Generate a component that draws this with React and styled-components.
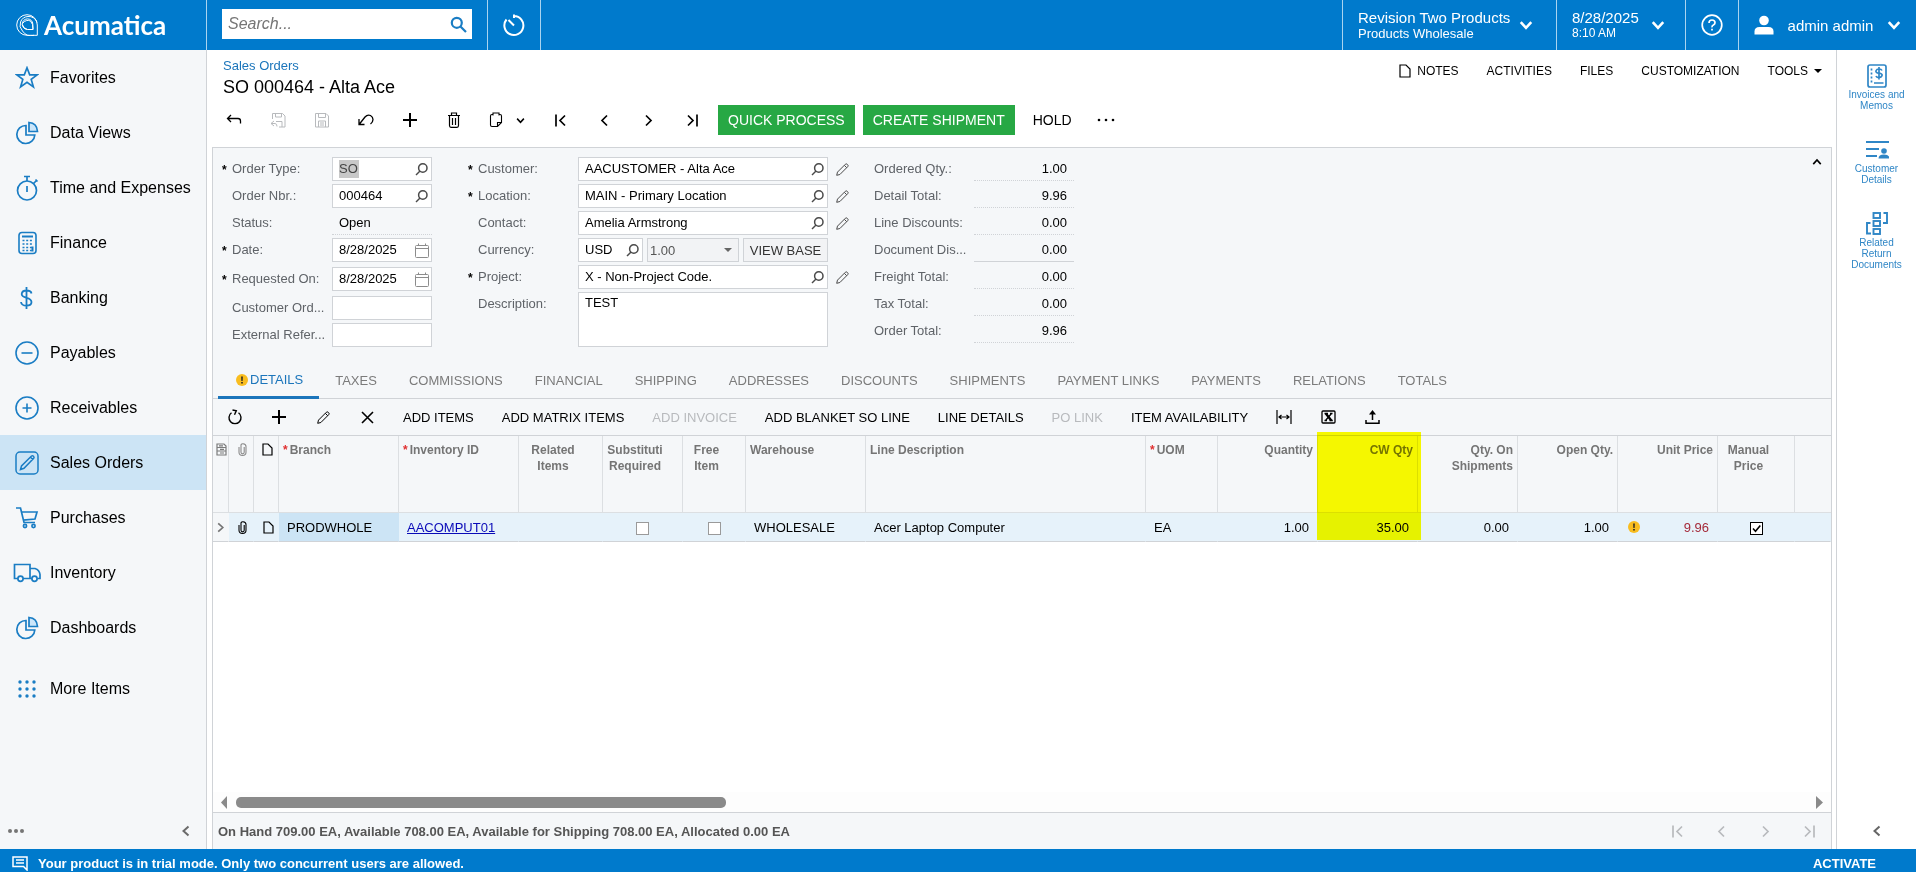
import React from "react"
import styled, { createGlobalStyle, css } from "styled-components"

const colors = {
  blue: "#007acc",
  icon: "#1a7dc4",
  link: "#1b75bb",
  panel: "#f5f7f9",
  line: "#d0d3d7",
  label: "#5f6368",
  muted: "#7b7b7b",
  disabled: "#b8babd",
  green: "#27a844",
  active: "#cce4f5",
  row: "#e6f2fa",
  white: "#ffffff",
}

const GlobalStyle = createGlobalStyle`
  * { box-sizing: border-box; }
  body {
    margin: 0;
    font-family: "Liberation Sans", Arial, sans-serif;
    font-size: 13px;
    color: #000;
    background: ${colors.white};
  }
  button, input, select, textarea { font: inherit; color: inherit; margin: 0; }
  button { padding: 0; border: 0; background: none; cursor: pointer; }
  svg { display: block; flex: none; }
`

/* ---------- icons ---------- */

const Icon = ({ w = 16, h = w, sw = 1, color = "currentColor", children }) => (
  <svg
    width={w}
    height={h}
    viewBox={`0 0 ${w} ${h}`}
    fill="none"
    stroke={color}
    strokeWidth={sw}
    aria-hidden="true"
  >
    {children}
  </svg>
)

const Chevron = ({ dir = "down", w = 12, sw = 2, color }) => {
  const turn = { down: 0, left: 90, up: 180, right: 270 }[dir]
  return (
    <svg width={w} height={w} viewBox="0 0 12 12" fill="none" stroke={color || "currentColor"} strokeWidth={sw} aria-hidden="true">
      <path d="M1.5 3.5 6 8.5 10.5 3.5" transform={`rotate(${turn} 6 6)`} />
    </svg>
  )
}

const Caret = ({ color = "#000" }) => (
  <Icon w={8} h={4} color="none">
    <path d="M0 0h8L4 4z" fill={color} />
  </Icon>
)

const Lookup = () => (
  <Icon w={13} sw={1.5} color="#4a4a4a">
    <circle cx="7.8" cy="5" r="4.2" />
    <path d="M5 8 1 12" />
  </Icon>
)

const Calendar = () => (
  <Icon w={14} h={15} color="#8c8c8c">
    <rect x="0.5" y="2.5" width="13" height="12" rx="1" />
    <path d="M0 5.5h14M3.5 0.5v2M10.5 0.5v2" />
  </Icon>
)

const Pencil = ({ color = "#4a4a4a" }) => (
  <Icon w={13} sw={1} color={color}>
    <path d="M.7 12.3l.8-3.2L9.300 1.300q.9-.9 1.800-.1l.7.7q.8.9-.1 1.800L3.900 11.500zM8.300 2.300l2.400 2.400" />
  </Icon>
)

const Plus = () => (
  <Icon w={16} sw={2}>
    <path d="M8 1v14M1 8h14" />
  </Icon>
)

const Sheet = ({ w = 12, h = 14 }) => (
  <Icon w={w} h={h} sw={1.2}>
    <path d={`M1 1h${w - 6}l4 4v${h - 6}H1z`} />
  </Icon>
)

const Clip = ({ color = "#000" }) => (
  <Icon w={9} h={13} color={color} sw={1.1}>
    <path d="M6.2 4v5.2q0 1.6-1.6 1.6T3 9.2V3q0-2 .1-1.2Q3.6.6 5 .7q3 .2 3 2.8v5.7q0 3.2-3.5 3.2T1 9.2V4" />
  </Icon>
)

const Step = ({ dir, bar, w = 13, sw = 1.7 }) => (
  <Icon w={w} h={13} sw={sw}>
    {dir === "left" ? <path d="M11 1.5 6 6.5l5 5" /> : <path d="M2 1.5l5 5-5 5" />}
    {bar && (dir === "left" ? <path d="M2 .5v12" /> : <path d="M11 .5v12" />)}
  </Icon>
)

const Warning = () => (
  <Icon w={12} color="none">
    <circle cx="6" cy="6" r="6" fill="#f9bd1f" />
    <path d="M5.2 2.5h1.6L6.6 7H5.4zM5.2 8h1.6v1.6H5.2z" fill="#222" />
  </Icon>
)

const Logo = () => (
  <Icon w={22} h={22} sw={1} color="#fff">
    <path d="M21.3 21.3H11A10.3 10.3 0 1 1 21.3 11z" />
    <path d="M18 21.3A10.5 10.5 0 0 1 6.5 17 8.5 8.5 0 0 1 12 2.5a8.5 8.5 0 0 1 9 6" />
    <path d="M17 15.5h-5.5a5.3 5.3 0 1 1 5.3-5.5zM6.5 9.5Q10 5 14.5 7q2.7 2.5 2.5 8.5M6.3 10.5q1.2 4 5.2 5" />
  </Icon>
)

const Pie = () => (
  <Icon w={24} sw={1.7}>
    <path d="M11 4.5v9.5h8.8a9 9 0 1 1-8.8-9.5z" />
    <path d="M14 1.5v9h8.5q-.5-8.5-8.5-9z" fill="#cbe6fa" />
  </Icon>
)

const navIcons = {
  star: (
    <Icon w={24} sw={1.7}>
      <path d="M12 1.8l2.7 7h7.5l-6 4.6 2.2 7.6-6.4-4.6-6.4 4.6 2.2-7.6-6-4.6h7.5z" />
    </Icon>
  ),
  pie: <Pie />,
  stopwatch: (
    <Icon w={24} h={26} sw={1.7}>
      <circle cx="12" cy="15.5" r="9.5" />
      <path d="M12 11v6M9 1.5h6M12 1.5V6M18.5 8.5l3-3M20.5 4.5l2 2" />
    </Icon>
  ),
  calc: (
    <Icon w={24} sw={1.6}>
      <rect x="4" y="1.5" width="17" height="21" rx="3" />
      <path d="M7 5.5h11" strokeWidth="2" />
      <path d="M7.5 9.5h11M7.5 13h11M7.5 16.5h11M7.5 19.5h11" strokeDasharray="2 1.7" />
      <path d="M17.5 15.5v5" strokeWidth="2" />
    </Icon>
  ),
  dollar: (
    <Icon w={24} sw={1.8}>
      <path d="M11.5 1v22M16.5 7.5Q16 4.5 11.5 4.5T6.7 8q0 2.6 4.8 3.8t5 4.2q0 3.7-5 3.7T6 16" />
    </Icon>
  ),
  minus: (
    <Icon w={24} sw={1.6}>
      <circle cx="12" cy="12" r="11" />
      <path d="M6.5 12h11" />
    </Icon>
  ),
  plus: (
    <Icon w={24} sw={1.6}>
      <circle cx="12" cy="12" r="11" />
      <path d="M7.5 12h9M12 7.5v9" />
    </Icon>
  ),
  edit: (
    <Icon w={24} sw={1.5}>
      <rect x="1" y="1" width="22" height="22" rx="4" />
      <path d="M5.5 18.5l1-3.5 10-10q1-.7 2 .2t.2 2L9 17.3zM15.3 6l2.500 2.500" />
    </Icon>
  ),
  cart: (
    <Icon w={24} sw={1.7}>
      <path d="M1 2h4.5L9 16.5h11M6.500 6h15.500l-2 7-11.800 1.200" />
      <circle cx="10" cy="20" r="1.6" />
      <circle cx="18.5" cy="20" r="1.6" />
    </Icon>
  ),
  truck: (
    <Icon w={28} h={20} sw={1.7}>
      <path d="M5 15.5H1.5V1.5H17v14H10M17 5.5h5q4.5 1.5 5 6v4h-2.5M17 15.5h2" />
      <circle cx="7.5" cy="15.8" r="2.6" />
      <circle cx="21.5" cy="15.8" r="2.6" />
    </Icon>
  ),
  dots: (
    <Icon w={24} color="none">
      {[5, 12, 19].map(y => [5, 12, 19].map(x => (
        <circle key={`${x}-${y}`} cx={x} cy={y} r="1.7" fill={colors.icon} />
      )))}
    </Icon>
  ),
}

/* ---------- top bar ---------- */

const Page = styled.div`
  display: flex;
  flex-direction: column;
  min-height: 100vh;
`

const TopBar = styled.header`
  display: flex;
  height: 50px;
  background: ${colors.blue};
  color: ${colors.white};
`

const Brand = styled.a`
  display: flex;
  align-items: center;
  gap: 6px;
  width: 207px;
  padding-left: 16px;
  border-right: 1px solid #a9d4f0;
  color: ${colors.white};
  font-family: Lato, sans-serif;
  font-size: 26px;
  font-weight: 700;
  text-decoration: none;
`

const SearchBox = styled.form`
  display: flex;
  align-items: center;
  width: 250px;
  height: 30px;
  margin: 9px 15px 0;
  padding: 0 5px 0 6px;
  background: ${colors.white};
  color: ${colors.icon};
  input {
    flex: 1;
    min-width: 0;
    border: 0;
    padding: 0;
    outline: 0;
    font-size: 16px;
    font-style: italic;
    background: none;
    color: #333;
  }
  input::placeholder { color: #757575; }
`

const TopCell = styled.button`
  display: flex;
  align-items: center;
  justify-content: ${p => (p.$between ? "space-between" : "center")};
  width: ${p => p.$w}px;
  padding: ${p => p.$pad || "0"};
  border-left: 1px solid #a9d4f0;
  font-size: 15px;
  text-align: left;
`

const TopText = styled.span`
  display: flex;
  flex-direction: column;
  line-height: 17px;
  small {
    font-size: ${p => p.$small || 13}px;
    line-height: 15px;
  }
`

const Spacer = styled.div`
  flex: 1;
  ${p => p.$ruled && css`border-left: 1px solid #a9d4f0;`}
`

/* ---------- side menu ---------- */

const Body = styled.div`
  display: flex;
  flex: 1;
`

const SideMenu = styled.nav`
  display: flex;
  flex-direction: column;
  width: 207px;
  background: ${colors.panel};
  border-right: 1px solid ${colors.line};
`

const MenuLink = styled.a`
  display: flex;
  align-items: center;
  height: 55px;
  color: #000;
  font-size: 16px;
  text-decoration: none;
  margin-top: ${p => (p.$apart ? 6 : 0)}px;
  background: ${p => (p.$active ? colors.active : "none")};
  span {
    display: flex;
    justify-content: center;
    width: 50px;
    padding-left: 4px;
    color: ${colors.icon};
  }
`

const MenuFoot = styled.div`
  display: flex;
  align-items: center;
  justify-content: space-between;
  height: 36px;
  margin-top: auto;
  padding: 0 14px 0 8px;
  color: #757575;
`

/* ---------- document ---------- */

const Main = styled.main`
  display: flex;
  flex-direction: column;
  flex: 1;
  min-width: 0;
  padding: 0 4px 0 5px;
`

const TitleBar = styled.div`
  display: flex;
  justify-content: space-between;
  height: 50px;
  padding: 8px 10px 0 11px;
  a {
    display: block;
    line-height: 16px;
    color: ${colors.link};
    text-decoration: none;
  }
  h1 {
    margin: 0;
    font-size: 18px;
    line-height: 26px;
    font-weight: 400;
  }
`

const PageLinks = styled.div`
  display: flex;
  align-items: center;
  gap: 28px;
  height: 26px;
  button {
    display: flex;
    align-items: center;
    gap: 6px;
    font-size: 12px;
  }
`

const Toolbar = styled.div`
  display: flex;
  align-items: center;
  height: ${p => p.$h}px;
  margin-bottom: ${p => p.$gap || 0}px;
`

const IconButton = styled.button`
  display: flex;
  align-items: center;
  justify-content: center;
  gap: 13px;
  width: ${p => p.$w || 44}px;
  height: 30px;
  color: ${p => (p.disabled ? colors.disabled : "#000")};
`

const ActionButton = styled.button`
  height: 30px;
  padding: 0 10px;
  margin-left: ${p => (p.$first ? 4 : 8)}px;
  font-size: 14px;
  ${p => p.$green && css`
    background: ${colors.green};
    color: ${colors.white};
  `}
`

const TextButton = styled.button`
  height: 30px;
  padding: 0 14px;
  color: ${p => (p.disabled ? colors.disabled : "#000")};
`

const Panel = styled.section`
  display: flex;
  flex-direction: column;
  flex: 1;
  border: 1px solid ${colors.line};
  border-bottom: 0;
  background: ${colors.panel};
`

const OrderForm = styled.form`
  display: grid;
  grid-template-columns: 246px 396px 210px 1fr;
  padding: 9px 9px 11px;
`

const FieldRow = styled.div`
  display: grid;
  grid-template-columns: 10px 100px 1fr;
  width: ${p => p.$w || 210}px;
  padding-bottom: ${p => (p.$tall ? 5 : 3)}px;
  line-height: 24px;
  > b {
    padding-top: 3px;
    font-size: 12px;
    line-height: 21px;
  }
  > label {
    color: ${colors.label};
    white-space: nowrap;
  }
`

const Controls = styled.div`
  display: flex;
  gap: 4px;
`

const Box = styled.div`
  display: flex;
  align-items: center;
  justify-content: space-between;
  width: ${p => p.$w || 100}px;
  height: 24px;
  padding: 0 ${p => (p.$date ? 2 : 3)}px 0 6px;
  border: 1px solid ${colors.line};
  background: ${colors.white};
  input {
    flex: 1;
    min-width: 0;
    height: 18px;
    padding: 0;
    border: 0;
    outline: 0;
    background: none;
  }
  ${p => p.$picked && css`
    input {
      flex: none;
      width: 20px;
      color: #444;
      background: #c8c8c8;
    }
  `}
`

const Output = styled.output`
  height: 24px;
  padding: 0 7px;
  border-bottom: 1px ${p => (p.$solid ? "solid" : "dotted")} ${colors.line};
  text-align: ${p => (p.$right ? "right" : "left")};
`

const RateSelect = styled.div`
  display: flex;
  align-items: center;
  width: 92px;
  height: 24px;
  padding: 0 6px 0 2px;
  border: 1px solid ${colors.line};
  background: #f2f3f5;
  color: #555;
  select {
    flex: 1;
    height: 22px;
    padding: 0;
    appearance: none;
    border: 0;
    outline: 0;
    background: none;
  }
`

const BaseButton = styled.button`
  width: 85px;
  height: 24px;
  border: 1px solid ${colors.line};
  background: #f2f3f5;
  color: #333;
`

const Note = styled.textarea`
  width: 250px;
  height: 55px;
  padding: 2px 6px;
  border: 1px solid ${colors.line};
  resize: none;
  line-height: 16px;
`

const EditButton = styled.button`
  display: flex;
  align-items: center;
  padding: 0 4px;
`

const Collapse = styled.button`
  justify-self: end;
  align-self: start;
  height: 4px;
`

const TabRow = styled.div`
  display: flex;
  height: 38px;
  padding-left: 5px;
  border-bottom: 1px solid ${colors.line};
`

const Tab = styled.button`
  display: flex;
  align-items: center;
  gap: 2px;
  height: 38px;
  padding: 0 16px;
  color: ${colors.muted};
  ${p => p.$active && css`
    padding: 2px 16px 0 18px;
    color: ${colors.link};
    border-bottom: 3px solid ${colors.link};
  `}
`

/* ---------- grid ---------- */

const Lines = styled.table`
  width: 100%;
  table-layout: fixed;
  border-collapse: separate;
  border-spacing: 0;
  border-top: 1px solid ${colors.line};
`

const Th = styled.th`
  position: relative;
  height: 77px;
  padding: 6px ${p => (p.$align === "center" ? 19 : 4)}px 0 4px;
  text-align: ${p => p.$align || "left"};
  ${p => p.$icon && css`padding: 7px 0 0 2px;`}
  vertical-align: top;
  border-right: 1px solid #dcdfe2;
  border-bottom: 1px solid #dcdfe2;
  color: #757575;
  font-size: 12px;
  line-height: 16px;
  i {
    color: #e03030;
    font-style: normal;
    margin-right: 2px;
  }
  &:last-child { border-right: 0; }
`

const HeadIcon = styled.span`
  display: flex;
  justify-content: center;
  color: ${p => (p.$dark ? "#000" : "#7b7b7b")};
`

const Td = styled.td`
  height: 29px;
  padding: 0 8px;
  text-align: ${p => p.$align || "left"};
  color: ${p => p.$color || "#000"};
  background: ${p => p.$bg || colors.row};
  border-right: 1px solid ${p => p.$bg || colors.row};
  border-bottom: 1px solid ${colors.line};
  white-space: nowrap;
  a { color: #0a0ab8; }
  ${p => p.$icon && css`padding: 0 0 0 ${p.$icon}px;`}
`

const Tick = styled.input.attrs({ type: "checkbox" })`
  display: inline-block;
  appearance: none;
  width: 13px;
  height: 13px;
  margin: 0;
  vertical-align: middle;
  border: 1px solid #9a9a9a;
  background: ${colors.white};
  &:checked { border-color: #000; }
`

const TickWrap = styled.span`
  display: inline-grid;
  vertical-align: middle;
  > * { grid-area: 1 / 1; }
  svg { position: relative; pointer-events: none; }
`

const PriceCell = styled.div`
  display: flex;
  align-items: center;
  justify-content: space-between;
  padding-left: 2px;
`

// marker drawn over the header and the first row of one column
const Highlight = styled.div`
  position: absolute;
  z-index: 1;
  top: -4px;
  left: -1px;
  width: 104px;
  height: 108px;
  background: #ffff00;
  mix-blend-mode: multiply;
  pointer-events: none;
`

const GridSpace = styled.div`
  flex: 1;
  background: ${colors.white};
`

const ScrollBar = styled.div`
  display: flex;
  align-items: center;
  gap: 9px;
  height: 20px;
  padding: 0 8px;
  background: #fdfdfd;
`

const Thumb = styled.div`
  width: 490px;
  height: 11px;
  border-radius: 5px;
  background: #8a8a8a;
`

const GridFoot = styled.div`
  display: flex;
  align-items: center;
  justify-content: space-between;
  height: 37px;
  padding-left: 5px;
  border-top: 1px solid ${colors.line};
  color: #555;
  font-weight: 700;
`

const Pager = styled.div`
  display: flex;
`

/* ---------- right rail, footer ---------- */

const Rail = styled.aside`
  display: flex;
  flex-direction: column;
  align-items: center;
  width: 80px;
  padding-top: 12px;
  border-left: 1px solid ${colors.line};
`

const RailLink = styled.a`
  display: flex;
  flex-direction: column;
  align-items: center;
  width: 62px;
  min-height: 74px;
  color: #2f86c6;
  font-size: 10px;
  line-height: 11px;
  text-align: center;
  text-decoration: none;
`

const RailButton = styled.button`
  display: flex;
  align-items: center;
  height: 36px;
  margin-top: auto;
  color: #666;
`

const TrialBar = styled.footer`
  display: flex;
  align-items: center;
  gap: 10px;
  height: 23px;
  padding: 6px 40px 0 12px;
  background: ${colors.blue};
  color: ${colors.white};
  font-weight: 700;
  p { flex: 1; margin: 0; }
  a { color: ${colors.white}; text-decoration: none; }
`

/* ---------- data ---------- */

const menu = [
  ["Favorites", "star"],
  ["Data Views", "pie"],
  ["Time and Expenses", "stopwatch"],
  ["Finance", "calc"],
  ["Banking", "dollar"],
  ["Payables", "minus"],
  ["Receivables", "plus"],
  ["Sales Orders", "edit"],
  ["Purchases", "cart"],
  ["Inventory", "truck"],
  ["Dashboards", "pie"],
  ["More Items", "dots"],
]

const totals = [
  ["Ordered Qty.:", "1.00"],
  ["Detail Total:", "9.96"],
  ["Line Discounts:", "0.00"],
  ["Document Dis...", "0.00"],
  ["Freight Total:", "0.00"],
  ["Tax Total:", "0.00"],
  ["Order Total:", "9.96"],
]

const tabs = [
  "TAXES", "COMMISSIONS", "FINANCIAL", "SHIPPING", "ADDRESSES", "DISCOUNTS",
  "SHIPMENTS", "PAYMENT LINKS", "PAYMENTS", "RELATIONS", "TOTALS",
]

const lineActions = [
  ["ADD ITEMS"],
  ["ADD MATRIX ITEMS"],
  ["ADD INVOICE", true],
  ["ADD BLANKET SO LINE"],
  ["LINE DETAILS"],
  ["PO LINK", true],
  ["ITEM AVAILABILITY"],
]

const colWidths = [16, 25, 25, 120, 120, 84, 80, 63, 120, 280, 72, 100, 100, 100, 100, 100, 77]

/* ---------- parts ---------- */

const Field = ({ id, label, value, required, tall, w = 100, rowW, kind = "lookup", edit, picked }) => (
  <FieldRow $w={rowW} $tall={tall}>
    <b>{required ? "*" : ""}</b>
    <label htmlFor={id}>{label}</label>
    <Controls>
      <Box $w={w} $date={kind === "date"} $picked={picked}>
        <input id={id} defaultValue={value} />
        {kind === "lookup" && <button type="button" aria-label={`Find ${label}`}><Lookup /></button>}
        {kind === "date" && <button type="button" aria-label={`Pick ${label}`}><Calendar /></button>}
      </Box>
      {edit && <EditButton type="button" aria-label={`Edit ${label}`}><Pencil /></EditButton>}
    </Controls>
  </FieldRow>
)

const Header = () => (
  <TopBar>
    <Brand href="#"><Logo />Acumatica</Brand>
    <SearchBox>
      <input aria-label="Search" placeholder="Search..." />
      <button type="button" aria-label="Search">
        <Icon w={17} sw={2.2}>
          <circle cx="6.8" cy="6.8" r="5" />
          <path d="M10.5 10.5l5.5 5.5" />
        </Icon>
      </button>
    </SearchBox>
    <TopCell $w={53} aria-label="Recent">
      <Icon w={24} sw={2}>
        <path d="M12 3a9.500 9.500 0 1 1-7.500 3.500M12 1.500v3.500M12 12.500L6.500 7" />
      </Icon>
    </TopCell>
    <Spacer $ruled />
    <TopCell $w={214} $between $pad="0 23px 0 15px">
      <TopText>Revision Two Products<small>Products Wholesale</small></TopText>
      <Chevron w={14} sw={2.2} />
    </TopCell>
    <TopCell $w={129} $between $pad="0 20px 0 15px">
      <TopText $small={12}>8/28/2025<small>8:10 AM</small></TopText>
      <Chevron w={14} sw={2.2} />
    </TopCell>
    <TopCell $w={53} aria-label="Help">
      <Icon w={22} sw={1.7}>
        <circle cx="11" cy="11" r="9.8" />
        <path d="M8 9q0-3 3-3t3 2.7q0 1.5-1.6 2.3T11 13.3M11 14.8v1.7" />
      </Icon>
    </TopCell>
    <TopCell $w={178} $between $pad="0 15px">
      <Icon w={20} color="none">
        <circle cx="10" cy="5.5" r="4.8" fill="#fff" />
        <path d="M.5 19.5v-3q0-4.5 5-4.5h9q5 0 5 4.5v3z" fill="#fff" />
      </Icon>
      admin admin
      <Chevron w={14} sw={2.2} />
    </TopCell>
  </TopBar>
)

const Sidebar = () => (
  <SideMenu>
    {menu.map(([label, icon]) => (
      <MenuLink
        key={label}
        href="#"
        $active={label === "Sales Orders"}
        $apart={label === "More Items"}
      >
        <span>{navIcons[icon]}</span>
        {label}
      </MenuLink>
    ))}
    <MenuFoot>
      <button aria-label="Menu options">
        <Icon w={17} h={4} color="none">
          {[2, 8, 14].map(x => <circle key={x} cx={x} cy="2" r="2" fill="#757575" />)}
        </Icon>
      </button>
      <button aria-label="Collapse menu"><Chevron dir="left" color="#6b6b6b" /></button>
    </MenuFoot>
  </SideMenu>
)

const DocToolbar = () => (
  <Toolbar $h={40} $gap={7}>
    <IconButton aria-label="Back">
      <Icon w={16} h={14} sw={1.3}><path d="M5 2 1.500 5.500 5 9M1.500 5.500H12q2.500 0 2.500 2.500v2.500" /></Icon>
    </IconButton>
    <IconButton aria-label="Save and close" disabled>
      <Icon w={16} h={16}>
        <path d="M2.5 7V1.5h10l2.5 2.5v11h-6M5.5 1.5V5h6V1.5M6 9.5h6V15M4 9 1 11.5 4 14M1 11.5h4q2 0 2 3" />
      </Icon>
    </IconButton>
    <IconButton aria-label="Save" disabled>
      <Icon w={16} h={16}>
        <path d="M1.5 1.5h10.5l2.5 2.5v11h-13zM4.5 1.5V5.5h7V1.5M4.5 15V9h7v6M6 11h4M6 13h4" />
      </Icon>
    </IconButton>
    <IconButton aria-label="Undo">
      <Icon w={16} h={14} sw={1.3}><path d="M1 6v5.5h5.5M1.5 11 7 4q2.5-2.8 5.5-1.5 2.5 1.5 2.5 4T12.5 11" /></Icon>
    </IconButton>
    <IconButton aria-label="Add"><Plus /></IconButton>
    <IconButton aria-label="Delete">
      <Icon w={14} h={16} sw={1.2}><path d="M1 3.5h12M2.5 3.5v10q0 1.8 1.5 1.8h6q1.5 0 1.5-1.8v-10M4.5 3.5V1h5v2.5M5.5 6v7M8.5 6v7" /></Icon>
    </IconButton>
    <IconButton aria-label="Copy and paste" $w={62}>
      <Icon w={14} h={16} sw={1.1}><path d="M4 2.500H3q-1.500 0-1.500 1.500v9q0 1.500 1.500 1.500h5.500l4-4V4q0-1.500-1.500-1.500h-1M4 3.500V1h6v2.500M8.500 14.500v-4h4" /></Icon>
      <Chevron w={9} sw={2} />
    </IconButton>
    <IconButton aria-label="First"><Step dir="left" bar /></IconButton>
    <IconButton aria-label="Previous"><Step dir="left" w={16} /></IconButton>
    <IconButton aria-label="Next"><Step dir="right" w={9} /></IconButton>
    <IconButton aria-label="Last"><Step dir="right" bar /></IconButton>
    <ActionButton $green $first>QUICK PROCESS</ActionButton>
    <ActionButton $green>CREATE SHIPMENT</ActionButton>
    <ActionButton>HOLD</ActionButton>
    <IconButton aria-label="More actions" $w={48}>
      <Icon w={18} h={4} color="none">
        {[2, 9, 16].map(x => <circle key={x} cx={x} cy="2" r="1.3" fill="#000" />)}
      </Icon>
    </IconButton>
  </Toolbar>
)

const Summary = () => (
  <OrderForm>
    <div>
      <Field id="type" label="Order Type:" value="SO" required picked />
      <Field id="nbr" label="Order Nbr.:" value="000464" />
      <FieldRow>
        <b />
        <label htmlFor="status">Status:</label>
        <Output id="status">Open</Output>
      </FieldRow>
      <Field id="date" label="Date:" value="8/28/2025" required tall kind="date" />
      <Field id="requested" label="Requested On:" value="8/28/2025" required tall kind="date" />
      <Field id="custorder" label="Customer Ord..." kind="text" />
      <Field id="extref" label="External Refer..." kind="text" />
    </div>
    <div>
      <Field id="customer" label="Customer:" value="AACUSTOMER - Alta Ace" required edit w={250} rowW={390} />
      <Field id="location" label="Location:" value="MAIN - Primary Location" required edit w={250} rowW={390} />
      <Field id="contact" label="Contact:" value="Amelia Armstrong" edit w={250} rowW={390} />
      <FieldRow $w={390}>
        <b />
        <label htmlFor="currency">Currency:</label>
        <Controls>
          <Box $w={65}>
            <input id="currency" defaultValue="USD" />
            <button type="button" aria-label="Find currency"><Lookup /></button>
          </Box>
          <RateSelect>
            <select aria-label="Rate" defaultValue="1.00"><option>1.00</option></select>
            <Caret color="#666" />
          </RateSelect>
          <BaseButton type="button">VIEW BASE</BaseButton>
        </Controls>
      </FieldRow>
      <Field id="project" label="Project:" value="X - Non-Project Code." required edit w={250} rowW={390} />
      <FieldRow $w={390}>
        <b />
        <label htmlFor="description">Description:</label>
        <Note id="description" defaultValue="TEST" />
      </FieldRow>
    </div>
    <div>
      {totals.map(([label, value], i) => (
        <FieldRow key={label}>
          <b />
          <label htmlFor={`total${i}`}>{label}</label>
          <Output id={`total${i}`} $right $solid={i === 3}>{value}</Output>
        </FieldRow>
      ))}
    </div>
    <Collapse type="button" aria-label="Collapse summary"><Chevron dir="up" w={10} /></Collapse>
  </OrderForm>
)

const LinesToolbar = () => (
  <Toolbar $h={36}>
    <IconButton aria-label="Refresh">
      <Icon w={16} h={16} sw={1.4}><path d="M11.500 3.800A6 6 0 1 1 4.500 3.800M5.500 1l3.800.8-1.800 4" /></Icon>
    </IconButton>
    <IconButton aria-label="Add row"><Plus /></IconButton>
    <IconButton aria-label="Edit row"><Pencil color="#000" /></IconButton>
    <IconButton aria-label="Delete row">
      <Icon w={13} sw={1.6}><path d="M1 1l11 11M12 1 1 12" /></Icon>
    </IconButton>
    {lineActions.map(([label, off]) => (
      <TextButton key={label} disabled={off}>{label}</TextButton>
    ))}
    <IconButton aria-label="Fit columns">
      <Icon w={16} h={14} sw={1.2}><path d="M1 0v14M15 0v14M3 7h10M5.500 5 3 7l2.500 2M10.500 5 13 7l-2.500 2" /></Icon>
    </IconButton>
    <IconButton aria-label="Export to Excel">
      <Icon w={15} h={14} sw={1.3}>
        <rect x="1" y="1" width="13" height="12" rx="1" />
        <path d="M4.8 3.5l5.5 7" strokeWidth="2.4" />
        <path d="M10.5 3.5l-6 7M3.5 3.5h3.5M9 3.5h2.5M3.5 10.5H6M8.5 10.5h3.3" />
      </Icon>
    </IconButton>
    <IconButton aria-label="Upload">
      <Icon w={15} h={14} sw={1.5}>
        <path d="M7.5 10V2M1 10v3.2h13V10" />
        <path d="M4 4.500L7.500 0 11 4.500z" fill="#000" stroke="none" />
      </Icon>
    </IconButton>
  </Toolbar>
)

const OrderLines = () => (
  <Lines>
    <colgroup>
      {colWidths.map((w, i) => <col key={i} style={{ width: w }} />)}
      <col />
    </colgroup>
    <thead>
      <tr>
        <Th $icon aria-label="Row">
          <HeadIcon>
            <Icon w={11} h={13} sw={1.2}>
              <path d="M1 1h7l2 2v9H1zM1 4.5h9M1 8h9M3 2.8h4M4 6.3h4M4 10h4" />
            </Icon>
          </HeadIcon>
        </Th>
        <Th $icon aria-label="Files"><HeadIcon><Clip color="#8a8a8a" /></HeadIcon></Th>
        <Th $icon aria-label="Notes"><HeadIcon $dark><Sheet w={11} h={13} /></HeadIcon></Th>
        <Th><i>*</i>Branch</Th>
        <Th><i>*</i>Inventory ID</Th>
        <Th $align="center">Related Items</Th>
        <Th $align="center">Substituti Required</Th>
        <Th $align="center">Free Item</Th>
        <Th>Warehouse</Th>
        <Th>Line Description</Th>
        <Th><i>*</i>UOM</Th>
        <Th $align="right">Quantity</Th>
        <Th $align="right">CW Qty<Highlight /></Th>
        <Th $align="right">Qty. On Shipments</Th>
        <Th $align="right">Open Qty.</Th>
        <Th $align="right">Unit Price</Th>
        <Th $align="center">Manual Price</Th>
        <Th />
      </tr>
    </thead>
    <tbody>
      <tr>
        <Td $icon={2} $bg={colors.panel}><Chevron dir="right" w={11} sw={1.8} color="#757575" /></Td>
        <Td $icon={9}><Clip /></Td>
        <Td $icon={9}><Sheet w={11} h={13} /></Td>
        <Td $bg={colors.active}>PRODWHOLE</Td>
        <Td><a href="#">AACOMPUT01</a></Td>
        <Td />
        <Td $align="center"><Tick aria-label="Substitution required" /></Td>
        <Td $align="center"><Tick aria-label="Free item" /></Td>
        <Td>WHOLESALE</Td>
        <Td>Acer Laptop Computer</Td>
        <Td>EA</Td>
        <Td $align="right">1.00</Td>
        <Td $align="right">35.00</Td>
        <Td $align="right">0.00</Td>
        <Td $align="right">1.00</Td>
        <Td $color="#a52a3a"><PriceCell><Warning />9.96</PriceCell></Td>
        <Td $align="center">
          <TickWrap>
            <Tick aria-label="Manual price" defaultChecked />
            <Icon w={13} sw={1.6}><path d="M3 6.5l2.5 2.7L10.3 3.5" /></Icon>
          </TickWrap>
        </Td>
        <Td />
      </tr>
    </tbody>
  </Lines>
)

const RightRail = () => (
  <Rail>
    <RailLink href="#">
      <Icon w={24} h={27} sw={1.7}>
        <rect x="3" y="3" width="18" height="22" rx="2" />
        <path d="M6.5 6.5v15" strokeDasharray="2 2" />
        <path d="M9 21h9.5M17 8.5q-.7-1.5-3-1.5t-3 1.8 3 2.4 3 2.4-3 2T11 14M14 5v12.5" />
      </Icon>
      Invoices and Memos
    </RailLink>
    <RailLink href="#">
      <Icon w={24} h={27} sw={1.9}>
        <path d="M1 6h23M1 13h13M1 20h11" />
        <circle cx="19" cy="15" r="2.8" fill="currentColor" stroke="none" />
        <path d="M13.5 22.5q0-4 5.5-4t5.5 4z" fill="currentColor" stroke="none" />
      </Icon>
      Customer Details
    </RailLink>
    <RailLink href="#">
      <Icon w={24} h={27} sw={1.9}>
        <rect x="8.500" y="3" width="6.500" height="5" />
        <rect x="8.500" y="11" width="6.500" height="5" />
        <rect x="8.500" y="19" width="6.500" height="5" />
        <path d="M18.500 3H22V13h-4M5.500 13H2v10.500h4" />
      </Icon>
      Related Return Documents
    </RailLink>
    <RailButton aria-label="Collapse side panel"><Chevron dir="left" /></RailButton>
  </Rail>
)

const App = () => (
  <Page>
    <GlobalStyle />
    <Header />
    <Body>
      <Sidebar />
      <Main>
        <TitleBar>
          <div>
            <a href="#">Sales Orders</a>
            <h1>SO 000464 - Alta Ace</h1>
          </div>
          <PageLinks>
            <button><Sheet w={12} h={14} />NOTES</button>
            <button>ACTIVITIES</button>
            <button>FILES</button>
            <button>CUSTOMIZATION</button>
            <button>TOOLS<Caret /></button>
          </PageLinks>
        </TitleBar>
        <DocToolbar />
        <Panel>
          <Summary />
          <TabRow>
            <Tab $active><Warning />DETAILS</Tab>
            {tabs.map(t => <Tab key={t}>{t}</Tab>)}
          </TabRow>
          <LinesToolbar />
          <OrderLines />
          <GridSpace />
          <ScrollBar>
            <Icon w={6} h={13} color="none"><path d="M6 0v13L0 6.5z" fill="#8a8a8a" /></Icon>
            <Thumb />
            <Spacer />
            <Icon w={7} h={13} color="none"><path d="M0 0v13l7-6.5z" fill="#8a8a8a" /></Icon>
          </ScrollBar>
          <GridFoot>
            On Hand 709.00 EA, Available 708.00 EA, Available for Shipping 708.00 EA, Allocated 0.00 EA
            <Pager>
              <IconButton disabled aria-label="First page"><Step dir="left" bar /></IconButton>
              <IconButton disabled aria-label="Previous page"><Step dir="left" w={16} /></IconButton>
              <IconButton disabled aria-label="Next page"><Step dir="right" w={9} /></IconButton>
              <IconButton disabled aria-label="Last page"><Step dir="right" bar /></IconButton>
            </Pager>
          </GridFoot>
        </Panel>
      </Main>
      <RightRail />
    </Body>
    <TrialBar>
      <Icon w={16} h={15} sw={1.5}>
        <path d="M1 1h14v13l-3.500-3.500H1zM4 4h8M4 7h8" />
      </Icon>
      <p>Your product is in trial mode. Only two concurrent users are allowed.</p>
      <a href="#">ACTIVATE</a>
    </TrialBar>
  </Page>
)

export default App
